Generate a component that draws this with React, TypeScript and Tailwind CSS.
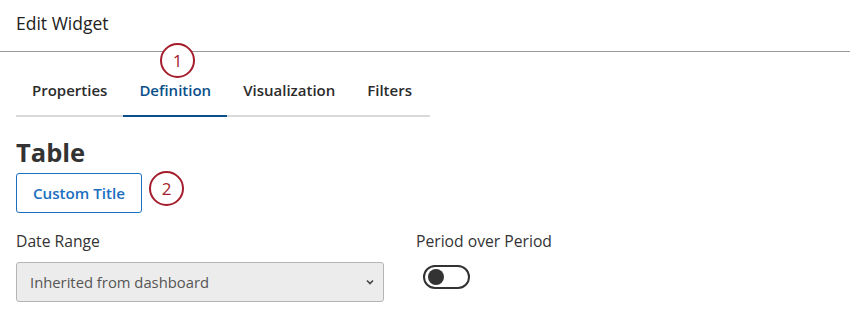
const font = { fontFamily: '"Open Sans", "Noto Sans", sans-serif' };

function Callout({ n, className }: { n: string; className: string }) {
  return (
    <div
      className={`absolute w-[35px] h-[35px] rounded-full border-[2.5px] border-[#a51d2c] bg-white flex items-center justify-center text-[17px] text-[#a51d2c] ${className}`}
    >
      {n}
    </div>
  );
}

export default function App() {
  const tabs = ["Properties", "Definition", "Visualization", "Filters"];
  return (
    <div
      className="relative w-[850px] h-[317px] bg-white text-[#333] overflow-hidden font-['Open_Sans','Noto_Sans',sans-serif]"
      style={font}
    >
      {/* Header */}
      <div className="h-[52px] border-b border-[#9a9a9a] flex items-center pl-4 pb-[4px]">
        <span className="text-[17.5px] text-[#222]">Edit Widget</span>
      </div>

      {/* Tabs */}
      <div className="ml-4 mt-[14px] w-[414px] flex border-b-2 border-[#d9d9d9]">
        {tabs.map((t) => (
          <div
            key={t}
            className={`relative h-[49px] px-4 flex items-center text-[15px] font-semibold ${
              t === "Definition" ? "text-[#0b4f8a]" : "text-[#2b2b2b]"
            }`}
          >
            {t}
            {t === "Definition" && (
              <div className="absolute left-0 right-0 -bottom-[2px] h-[2px] bg-[#0b4f8a]" />
            )}
          </div>
        ))}
      </div>

      <div className="pl-4">
        <h1 className="mt-[19px] text-[25.5px] leading-8 font-bold text-[#333]">Table</h1>
        <button className="mt-[5px] h-10 w-[126px] rounded-[3px] border border-[#1a6fc0] text-[15.2px] font-semibold text-[#1a6fc0]">
          Custom Title
        </button>

        <div className="mt-[18px] flex gap-8">
          <div className="w-[368px]">
            <div className="text-[15.7px] leading-5 text-[#333]">Date Range</div>
            <div className="mt-[11px] h-10 rounded-[3px] border border-[#b5b5b5] bg-[#ececec] flex items-center justify-between pl-[13px] pr-[8px]">
              <span className="text-[14.8px] text-[#555]">Inherited from dashboard</span>
              <svg width="10" height="10" viewBox="0 0 10 10">
                <path d="M2 3.5 L5 6.5 L8 3.5" fill="none" stroke="#444" strokeWidth="1.6" />
              </svg>
            </div>
          </div>
          <div>
            <div className="text-[15.7px] leading-5 text-[#333]">Period over Period</div>
            <div className="mt-[14px] ml-[7px] w-[47px] h-6 rounded-full border-2 border-[#333] flex items-center px-[3px]">
              <div className="w-4 h-4 rounded-full bg-[#333]" />
            </div>
          </div>
        </div>
      </div>

      <Callout n="1" className="left-[160px] top-[43px]" />
      <Callout n="2" className="left-[149px] top-[171px]" />
    </div>
  );
}
